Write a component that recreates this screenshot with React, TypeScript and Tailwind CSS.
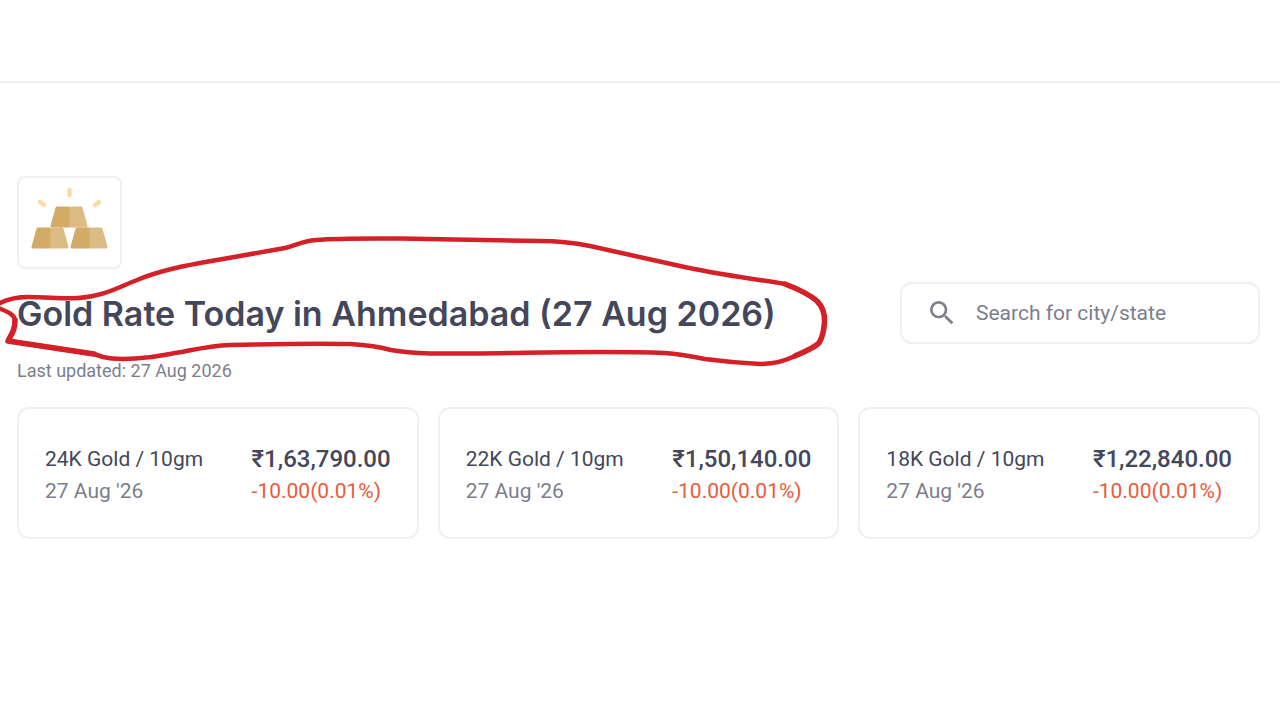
import React, { useState } from 'react';
import { MdSearch } from 'react-icons/md';

interface GoldRate {
  id: string;
  label: string;
  date: string;
  price: string;
  change: string;
}

const rates: GoldRate[] = [
  { id: '24k', label: '24K Gold / 10gm', date: "27 Aug '26", price: '₹1,63,790.00', change: '-10.00(0.01%)' },
  { id: '22k', label: '22K Gold / 10gm', date: "27 Aug '26", price: '₹1,50,140.00', change: '-10.00(0.01%)' },
  { id: '18k', label: '18K Gold / 10gm', date: "27 Aug '26", price: '₹1,22,840.00', change: '-10.00(0.01%)' },
];

const GoldBars = () => (
  <svg viewBox="0 0 80 72" className="w-20 h-[72px]" aria-hidden="true">
    <g strokeLinejoin="round" strokeWidth="3">
      <path d="M27 21h12v18H22z" fill="#d2ab67" stroke="#d2ab67" />
      <path d="M41 21h10l5 18H41z" fill="#dcbb85" stroke="#dcbb85" />
      <path d="M8 42h12v18H3z" fill="#d2ab67" stroke="#d2ab67" />
      <path d="M22 42h10l5 18H22z" fill="#dcbb85" stroke="#dcbb85" />
      <path d="M47 42h12v18H42z" fill="#d2ab67" stroke="#d2ab67" />
      <path d="M61 42h10l5 18H61z" fill="#dcbb85" stroke="#dcbb85" />
    </g>
    <g stroke="#f7dba8" strokeWidth="4.5" strokeLinecap="round">
      <path d="M39.5 3v5" />
      <path d="M10 15l4 3" />
      <path d="M69 15l-4 3" />
    </g>
  </svg>
);

// Hand-drawn marker line around the heading
const Scribble = () => (
  <svg
    viewBox="0 0 840 140"
    className="absolute -left-[17px] -top-[50px] w-[840px] max-w-none h-[140px] pointer-events-none"
    fill="none"
    stroke="#d42027"
    strokeLinecap="round"
    strokeLinejoin="round"
    aria-hidden="true"
  >
    <path
      strokeWidth="4.5"
      d="M-4 73C8 66 18 65 28 65C48 65 62 67 78 66C102 65 119 55 137 48C158 39 178 35 200 31L285 16C297 13 302 9 316 8C340 6 370 6.5 400 6.5L540 9C562 9 575 11 590 14L680 34C720 43 750 46 785 52C798 57 809 62 817 69C823 75 825 82 824.5 90C824 98 822 106 819 111C814 116 804 120 795 124C783 130 770 132 760 132C740 131 720 129 705 127C690 124 680 122 665 121C590 118 510 122 430 121.5C412 121 402 120 391 118C377 114 366 113 350 112C310 111 270 112 230 113C205 114 190 119 170 122C150 126 120 129 103 125L94 122L8 109C13 100 15 95 15 88C14 82 8 80 -4 75"
    />
    <path strokeWidth="5.5" d="M8 109L94 122M9 107C14 99 15 95 15 88" />
    <path strokeWidth="5.5" d="M785 52C798 57 809 62 817 69C823 75 825 82 824.5 90C824 98 822 106 819 111C814 116 804 120 795 124" />
  </svg>
);

const RateCard: React.FC<{ rate: GoldRate }> = ({ rate }) => (
  <li className="flex justify-between items-center border-2 border-[#f0f0f0] rounded-xl h-[132px] px-[26px] pt-1">
    <div className="flex flex-col">
      <h2 className="text-[21px] leading-8 text-[#44475b]">{rate.label}</h2>
      <p className="text-[21px] leading-8 text-[#7c7e8c]">{rate.date}</p>
    </div>
    <div className="flex flex-col">
      <p className="text-[24px] leading-8 font-medium text-[#44475b]">{rate.price}</p>
      <p className="text-[21px] leading-8 text-[#e85b3c]">{rate.change}</p>
    </div>
  </li>
);

export default function App() {
  const [query, setQuery] = useState('');

  return (
    <div className="min-h-screen overflow-x-hidden bg-white font-['Roboto','Noto_Sans',sans-serif]">
      <header className="h-[83px] border-b-2 border-[#eeeeee]" />

      <main className="pt-[93px] pl-[17px] pr-5">
        <div className="flex items-center justify-center w-[105px] h-[93px] border-2 border-[#f0f0f0] rounded-lg">
          <GoldBars />
        </div>

        <div className="relative flex items-center justify-between mt-[13px]">
          <h1 className="pt-0.5 text-[34px] leading-[60px] font-semibold text-[#44475b] whitespace-nowrap font-['Inter','Liberation_Sans',sans-serif]">
            Gold Rate Today in Ahmedabad (27 Aug 2026)
          </h1>
          <Scribble />
          <label className="flex items-center gap-[18px] w-[360px] h-[62px] px-6 border-2 border-[#f0f0f0] rounded-xl">
            <MdSearch className="w-8 h-8 shrink-0 text-[#7c7e8c]" />
            <input
              type="text"
              aria-label="Search for city/state"
              placeholder="Search for city/state"
              value={query}
              onChange={e => setQuery(e.target.value)}
              className="w-full min-w-0 pt-0.5 text-[21px] text-[#44475b] placeholder:text-[#7c7e8c] outline-none"
            />
          </label>
        </div>

        <p className="mt-[13px] text-lg leading-7 text-[#7c7e8c]">Last updated: 27 Aug 2026</p>

        <ul className="grid grid-cols-3 gap-[19px] mt-[22px]">
          {rates.map(rate => (
            <RateCard key={rate.id} rate={rate} />
          ))}
        </ul>
      </main>
    </div>
  );
}
